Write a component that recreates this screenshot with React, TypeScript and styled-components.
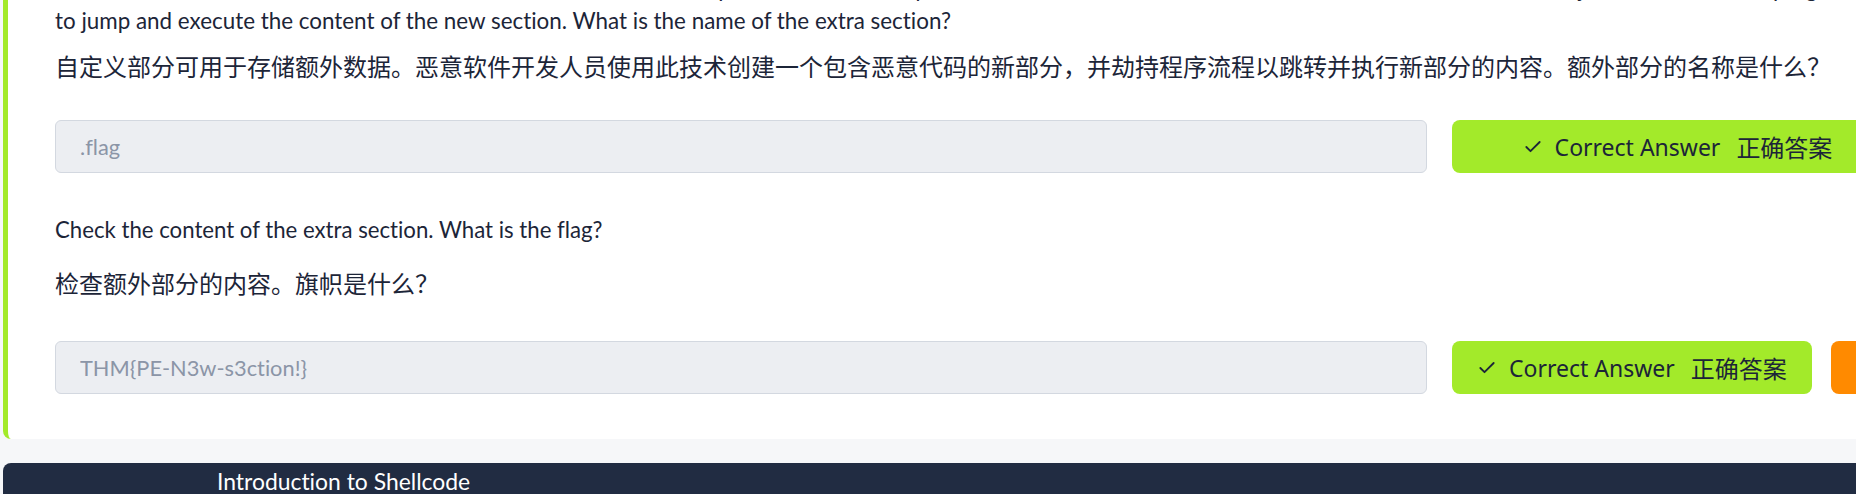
import React from "react";
import styled, { createGlobalStyle } from "styled-components";
import { Check, Lightbulb } from "lucide-react";

const GlobalStyle = createGlobalStyle`
  html, body {
    margin: 0;
    padding: 0;
    background: #f6f7f9;
    overflow: hidden;
  }
  * { box-sizing: border-box; }
`;

const Page = styled.div`
  width: 1856px;
  height: 494px;
  overflow: hidden;
  background: #f6f7f9;
  padding-left: 3px;
`;

const Card = styled.section`
  width: 1948px;
  margin-top: -27px;
  background: #ffffff;
  border-left: 5px solid #a3ea2a;
  border-radius: 8px;
  padding: 0 47px 45px 47px;
`;

const QuestionText = styled.p<{ $mt: number; $size: number }>`
  margin: ${(p) => p.$mt}px 0 0;
  font-family: Lato, "Liberation Sans", sans-serif;
  font-variant-ligatures: none;
  font-size: ${(p) => p.$size}px;
  line-height: 32px;
  color: #1c2538;
  white-space: nowrap;
`;

const Translation = styled.p<{ $mt: number }>`
  margin: ${(p) => p.$mt}px 0 0;
  font-family: "Noto Sans CJK SC", "Noto Sans", sans-serif;
  font-size: 24px;
  line-height: 36px;
  color: #1c2538;
  white-space: nowrap;
`;

const AnswerRow = styled.div<{ $mt: number }>`
  display: flex;
  gap: 25px;
  width: 1848px;
  height: 53px;
  margin-top: ${(p) => p.$mt}px;
`;

const AnswerField = styled.input`
  flex: 1;
  min-width: 0;
  height: 53px;
  padding: 0 24px;
  background: #eceef2;
  border: 1px solid #d3d8e0;
  border-radius: 6px;
  font-family: Lato, "Liberation Sans", sans-serif;
  font-variant-ligatures: none;
  font-size: 21.8px;
  color: #8b95a7;
  outline: none;
`;

const Actions = styled.div`
  flex: none;
  width: 451px;
  display: flex;
  gap: 19px;
`;

const CorrectButton = styled.button`
  flex: 1;
  display: flex;
  align-items: center;
  justify-content: center;
  gap: 12px;
  padding: 0 25px;
  background: #a3ea2a;
  border: 0;
  border-radius: 8px;
  color: #1c2538;
  font-family: "Noto Sans", sans-serif;
  font-size: 23px;
  white-space: nowrap;
`;

const ButtonZh = styled.span`
  margin-left: 4px;
  font-family: "Noto Sans CJK SC", sans-serif;
  font-size: 24px;
`;

const HintButton = styled.button`
  flex: none;
  width: 75px;
  display: flex;
  align-items: center;
  justify-content: center;
  background: #ff8a00;
  border: 0;
  border-radius: 8px;
  color: #ffffff;
`;

const TaskHeader = styled.div`
  width: 1940px;
  margin-top: 24px;
  padding: 2px 0 3px 214px;
  background: #212c42;
  border-radius: 8px 8px 0 0;
  color: #ffffff;
  font-family: Lato, "Liberation Sans", sans-serif;
  font-variant-ligatures: none;
  font-size: 22.9px;
  line-height: 32px;
`;

function Correct() {
  return (
    <CorrectButton type="button">
      <Check size={20} strokeWidth={2.2} />
      <span>Correct Answer</span>
      <ButtonZh>正确答案</ButtonZh>
    </CorrectButton>
  );
}

export default function App() {
  return (
    <>
      <GlobalStyle />
      <Page>
        <Card>
          <QuestionText $mt={0} $size={22.4}>
            A custom section could be used to store extra data. Malware developers use this technique to create a new section that contains their malicious code and hijack the flow of the program
            <br />
            to jump and execute the content of the new section. What is the name of the extra section?
          </QuestionText>
          <Translation $mt={11}>
            自定义部分可用于存储额外数据。恶意软件开发人员使用此技术创建一个包含恶意代码的新部分，并劫持程序流程以跳转并执行新部分的内容。额外部分的名称是什么？
          </Translation>
          <AnswerRow $mt={36}>
            <AnswerField value=".flag" readOnly />
            <Actions>
              <Correct />
            </Actions>
          </AnswerRow>

          <QuestionText $mt={41} $size={22.2}>
            Check the content of the extra section. What is the flag?
          </QuestionText>
          <Translation $mt={19}>检查额外部分的内容。旗帜是什么？</Translation>
          <AnswerRow $mt={40}>
            <AnswerField value="THM{PE-N3w-s3ction!}" readOnly />
            <Actions>
              <Correct />
              <HintButton type="button">
                <Lightbulb size={20} strokeWidth={2} />
              </HintButton>
            </Actions>
          </AnswerRow>
        </Card>
        <TaskHeader>Introduction to Shellcode</TaskHeader>
      </Page>
    </>
  );
}
